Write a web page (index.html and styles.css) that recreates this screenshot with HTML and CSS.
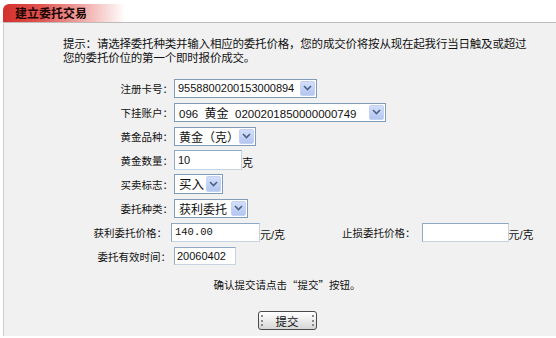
FILE: index.html
```html
<!Doctype html>
<html>
<head>
    <meta charset="UTF-8">
    <title>建立委托交易</title>
    <link rel="stylesheet" href="styles.css">
</head>
<body>
<div class="tab">建立委托交易</div>
<div class="panel">
    <p class="hint">提示：请选择委托种类并输入相应的委托价格，您的成交价将按从现在起我行当日触及或超过<br>您的委托价位的第一个即时报价成交。</p>
    <div class="form">
        <div class="row">
            <span class="lbl">注册卡号：</span>
            <div class="sel w1"><span class="val small">9558800200153000894</span><span class="arr"><svg width="9" height="6" viewBox="0 0 9 6"><path d="M1 1 L4.5 4.5 L8 1" fill="none" stroke="#4d6185" stroke-width="1.6"/></svg></span></div>
        </div>
        <div class="row">
            <span class="lbl">下挂账户：</span>
            <div class="sel w2"><span class="val">096&nbsp;&nbsp;<b class="cn">黄金</b>&nbsp;&nbsp;0200201850000000749</span><span class="arr"><svg width="9" height="6" viewBox="0 0 9 6"><path d="M1 1 L4.5 4.5 L8 1" fill="none" stroke="#4d6185" stroke-width="1.6"/></svg></span></div>
        </div>
        <div class="row">
            <span class="lbl">黄金品种：</span>
            <div class="sel w3"><span class="val cn">黄金（克）</span><span class="arr"><svg width="9" height="6" viewBox="0 0 9 6"><path d="M1 1 L4.5 4.5 L8 1" fill="none" stroke="#4d6185" stroke-width="1.6"/></svg></span></div>
        </div>
        <div class="row">
            <span class="lbl">黄金数量：</span>
            <input class="txt qty" type="text" value="10"><span class="unit">克</span>
        </div>
        <div class="row">
            <span class="lbl">买卖标志：</span>
            <div class="sel w5 big"><span class="val cn">买入</span><span class="arr"><svg width="9" height="6" viewBox="0 0 9 6"><path d="M1 1 L4.5 4.5 L8 1" fill="none" stroke="#4d6185" stroke-width="1.6"/></svg></span></div>
        </div>
        <div class="row">
            <span class="lbl">委托种类：</span>
            <div class="sel w6"><span class="val cn">获利委托</span><span class="arr"><svg width="9" height="6" viewBox="0 0 9 6"><path d="M1 1 L4.5 4.5 L8 1" fill="none" stroke="#4d6185" stroke-width="1.6"/></svg></span></div>
        </div>
        <div class="row">
            <span class="lbl short">获利委托价格：</span>
            <input class="txt price mono" type="text" value="140.00"><span class="unit">元/克</span>
            <span class="lbl stop">止损委托价格：</span>
            <input class="txt price2" type="text" value=""><span class="unit">元/克</span>
        </div>
        <div class="row">
            <span class="lbl date-lbl">委托有效时间：</span>
            <input class="txt date" type="text" value="20060402">
        </div>
    </div>
    <p class="confirm">确认提交请点击“提交”按钮。</p>
    <div class="act">
        <button class="submit" type="button"><i class="grip"></i><span>提交</span><i class="grip"></i></button>
    </div>
</div>
</body>
</html>
```

FILE: styles.css
```css
body,p{
    margin: 0;
    padding: 0;
}
body{
    background: #fff;
    color: #111;
    font-family: "Liberation Sans", "Noto Sans CJK SC", sans-serif;
}
.tab{
    width: 110px;height: 18px;
    margin: 4px 0 0 3px;
    padding-left: 12px;
    border-top-left-radius: 6px;
    background: linear-gradient(to right, #d4302c 0%, #e0524e 30%, #f0a8a6 65%, #fff 100%);
    font: bold 12px/18px "Noto Sans CJK SC", sans-serif;
    color: #1a0500;
}
.panel{
    height: 314px;
    margin-left: 3px;
    border-top: 1px solid #bcbcbc;
    border-left: 1px solid #cfcfcf;
    background: #f1f1f1;
    padding-top: 13px;
    box-sizing: border-box;
}
.hint{
    padding-left: 59px;
    font: 11.5px/14px "Noto Sans CJK SC", sans-serif;
    letter-spacing: -0.2px;
}
.form{
    margin-top: 12px;
    padding-left: 57px;
}
.row{
    display: flex;
    align-items: center;
    height: 24px;
}
.lbl{
    width: 112px;
    text-align: right;
    font: 10.5px "Noto Sans CJK SC", sans-serif;
    margin-right: 1px;
}
.lbl.short{
    width: 106px;
    margin-right: 4px;
}
.lbl.date-lbl{
    padding-right: 2px;
    box-sizing: border-box;
}
.lbl.stop{
    width: auto;
    margin-left: 57px;
    margin-right: 6px;
}
.sel{
    display: flex;
    align-items: stretch;
    height: 19px;
    box-sizing: border-box;
    border: 1px solid #7f9db9;
    background: #fff;
    font-size: 11.5px;
}
.sel.big{
    height: 20px;
}
.val{
    flex: 1;
    padding-left: 4px;
    line-height: 17px;
    white-space: nowrap;
    overflow: hidden;
}
.val.small{
    font-size: 11px;
    padding-left: 3px;
}
.cn{
    font-weight: normal;
    font-family: "Noto Sans CJK SC", sans-serif;
    font-size: 12px;
}
.big .cn{
    font-size: 12.5px;
}
.arr{
    width: 13px;
    margin: 1px;
    border: 1px solid #c3d1f3;
    border-radius: 2px;
    background: linear-gradient(#d3def9, #b3c6f1);
    display: flex;
    align-items: center;
    justify-content: center;
}
.w1{width: 143px;}
.w2{width: 212px;}
.w3{width: 82px;}
.w5{width: 49px;}
.w6{width: 74px;}
.txt{
    box-sizing: border-box;
    margin: 0;
    padding: 0 0 0 3px;
    border: 1px solid;
    border-color: #8fa8c4 #c5d3e2 #c5d3e2 #8fa8c4;
    background: #fff;
    font: 11px "Liberation Sans", sans-serif;
    color: #111;
    outline: none;
}
.mono{
    font-family: "Liberation Mono", monospace;
    font-size: 10.5px;
}
.qty{width: 68px;height: 20px;}
.price{width: 89px;height: 19px;}
.price2{width: 87px;height: 19px;}
.date{width: 62px;height: 18px;padding-left: 2px;}
.unit{
    align-self: flex-end;
    margin-bottom: 2px;
    font: 11px "Liberation Sans", "Noto Sans CJK SC", sans-serif;
}
.confirm{
    margin-top: 10px;
    padding-left: 14px;
    text-align: center;
    font: 10.5px/14px "Noto Sans CJK SC", sans-serif;
}
.act{
    margin-top: 19px;
    padding-left: 14px;
    display: flex;
    justify-content: center;
}
.submit{
    width: 59px;height: 19px;
    padding: 0 2px;
    display: flex;
    align-items: center;
    justify-content: space-between;
    border: 1px solid #4a4a4a;
    border-radius: 3px;
    background: linear-gradient(#ffffff, #ececec 50%, #d6d6d6);
    font: 11.5px "Noto Sans CJK SC", sans-serif;
    color: #111;
}
.grip{
    width: 0;height: 11px;
    border-left: 2px dotted #8a8a8a;
}
```
